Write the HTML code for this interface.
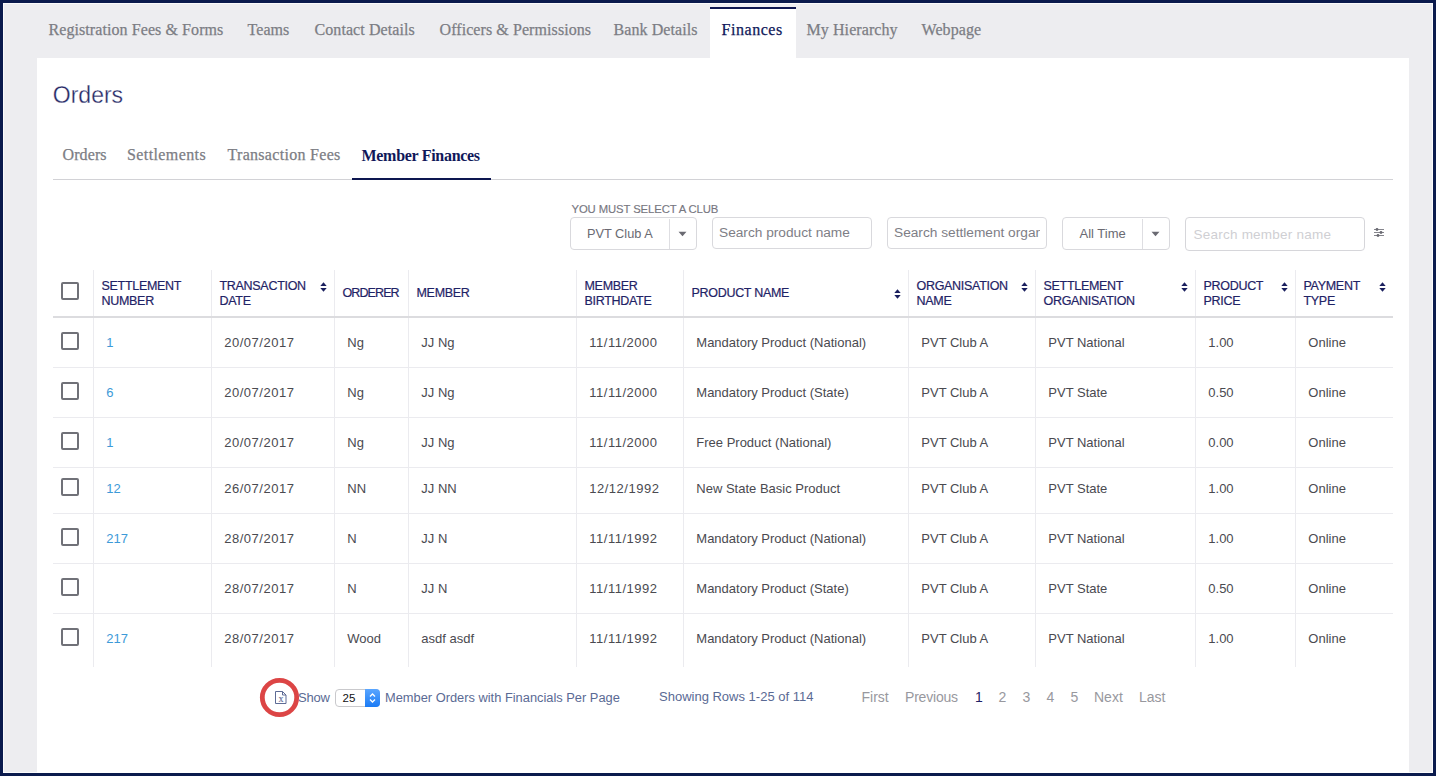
<!DOCTYPE html>
<html><head><meta charset="utf-8"><title>Orders</title>
<style>
*{box-sizing:border-box;margin:0;padding:0}
html,body{width:1436px;height:776px;overflow:hidden;background:#0b1b4d}
body{position:relative;font-family:'Liberation Sans',sans-serif}
.r{position:absolute}
.t{position:absolute;white-space:nowrap}
</style></head><body>
<div class="r" style="left:0px;top:0px;width:1436px;height:776px;background:#0b1b4d"></div>
<div class="r" style="left:3px;top:3px;width:1430px;height:770px;background:#fbfbfc"></div>
<div class="r" style="left:4px;top:4px;width:1428px;height:768px;background:#ededf0"></div>
<div class="r" style="left:710px;top:7px;width:86px;height:51px;background:#fff;border-top:2px solid #0d1650"></div>
<div class="r" style="left:37px;top:58px;width:1372px;height:715px;background:#fff"></div>
<div class="t" style="left:48.5px;top:20.00px;font:400 16px/19px 'Liberation Serif',serif;color:#7c7d84;letter-spacing:0.08px;-webkit-text-stroke:0.25px #7c7d84">Registration Fees &amp; Forms</div>
<div class="t" style="left:247.5px;top:20.00px;font:400 16px/19px 'Liberation Serif',serif;color:#7c7d84;letter-spacing:0.08px;-webkit-text-stroke:0.25px #7c7d84">Teams</div>
<div class="t" style="left:314.5px;top:20.00px;font:400 16px/19px 'Liberation Serif',serif;color:#7c7d84;letter-spacing:0.08px;-webkit-text-stroke:0.25px #7c7d84">Contact Details</div>
<div class="t" style="left:439.5px;top:20.00px;font:400 16px/19px 'Liberation Serif',serif;color:#7c7d84;letter-spacing:0.08px;-webkit-text-stroke:0.25px #7c7d84">Officers &amp; Permissions</div>
<div class="t" style="left:613.5px;top:20.00px;font:400 16px/19px 'Liberation Serif',serif;color:#7c7d84;letter-spacing:0.08px;-webkit-text-stroke:0.25px #7c7d84">Bank Details</div>
<div class="t" style="left:806.5px;top:20.00px;font:400 16px/19px 'Liberation Serif',serif;color:#7c7d84;letter-spacing:0.08px;-webkit-text-stroke:0.25px #7c7d84">My Hierarchy</div>
<div class="t" style="left:921.5px;top:20.00px;font:400 16px/19px 'Liberation Serif',serif;color:#7c7d84;letter-spacing:0.08px;-webkit-text-stroke:0.25px #7c7d84">Webpage</div>
<div class="t" style="left:721.5px;top:20.00px;font:400 16px/19px 'Liberation Serif',serif;color:#10185a;letter-spacing:0.55px;-webkit-text-stroke:0.25px #10185a">Finances</div>
<div class="t" style="left:52.8px;top:80.83px;font:400 23px/28px 'Liberation Sans',sans-serif;color:#262a66;letter-spacing:0px;-webkit-text-stroke:0.3px #fff">Orders</div>
<div class="t" style="left:62.5px;top:145.40px;font:400 16px/19px 'Liberation Serif',serif;color:#7c7d84;letter-spacing:0.1px;-webkit-text-stroke:0.25px #7c7d84">Orders</div>
<div class="t" style="left:127px;top:145.40px;font:400 16px/19px 'Liberation Serif',serif;color:#7c7d84;letter-spacing:0.4px;-webkit-text-stroke:0.25px #7c7d84">Settlements</div>
<div class="t" style="left:227.5px;top:145.40px;font:400 16px/19px 'Liberation Serif',serif;color:#7c7d84;letter-spacing:0.3px;-webkit-text-stroke:0.25px #7c7d84">Transaction Fees</div>
<div class="t" style="left:361.5px;top:145.70px;font:700 16px/19px 'Liberation Serif',serif;color:#10185a;letter-spacing:-0.3px;">Member Finances</div>
<div class="r" style="left:53px;top:179px;width:1340px;height:1px;background:#d2d2d6"></div>
<div class="r" style="left:352px;top:178px;width:139px;height:2px;background:#0d1650"></div>
<div class="t" style="left:571.5px;top:202.08px;font:400 11.3px/14px 'Liberation Sans',sans-serif;color:#77777f;letter-spacing:-0.1px;-webkit-text-stroke:0.15px #77777f">YOU MUST SELECT A CLUB</div>
<div class="r" style="left:570px;top:217px;width:127px;height:33px;border:1px solid #d9d9dd;border-radius:4px;background:#fff"></div>
<div class="r" style="left:669px;top:219px;width:1px;height:30px;background:#dedee2"></div>
<div class="t" style="left:587px;top:226.48px;font:400 12.75px/15px 'Liberation Sans',sans-serif;color:#6a6a72;letter-spacing:0px;">PVT Club A</div>
<svg class="r" style="left:678px;top:231px" width="9" height="6"><path d="M0.5 0.8 L8.5 0.8 L4.5 5.2 Z" fill="#6a6a72"/></svg>
<div class="r" style="left:712px;top:217px;width:160px;height:32px;border:1px solid #d9d9dd;border-radius:4px;background:#fff"></div>
<div class="t" style="left:719px;top:224.75px;font:400 13.7px/16px 'Liberation Sans',sans-serif;color:#7e7e86;letter-spacing:0px;">Search product name</div>
<div class="r" style="left:887px;top:217px;width:160px;height:32px;border:1px solid #d9d9dd;border-radius:4px;background:#fff;overflow:hidden"></div>
<div class="r" style="left:888px;top:218px;width:152px;height:30px;overflow:hidden"><div class="t" style="left:6px;top:4.75px;font:400 13.7px/20px 'Liberation Sans',sans-serif;color:#7e7e86">Search settlement organisation</div></div>
<div class="r" style="left:1062px;top:217px;width:108px;height:33px;border:1px solid #d9d9dd;border-radius:4px;background:#fff"></div>
<div class="r" style="left:1142px;top:219px;width:1px;height:30px;background:#dedee2"></div>
<div class="t" style="left:1079.5px;top:226.09px;font:400 13px/16px 'Liberation Sans',sans-serif;color:#6a6a72;letter-spacing:0px;">All Time</div>
<svg class="r" style="left:1151px;top:231px" width="9" height="6"><path d="M0.5 0.8 L8.5 0.8 L4.5 5.2 Z" fill="#6a6a72"/></svg>
<div class="r" style="left:1185px;top:217px;width:180px;height:34px;border:1.5px solid #d6d6da;border-radius:4px;background:#fff"></div>
<div class="t" style="left:1193.5px;top:226.92px;font:400 13.5px/16px 'Liberation Sans',sans-serif;color:#cfcfd3;letter-spacing:0.23px;">Search member name</div>
<svg class="r" style="left:1373px;top:227px" width="13" height="11"><g stroke="#85858c" stroke-width="1"><line x1="1" y1="2.5" x2="11" y2="2.5"/><line x1="1" y1="5.5" x2="11" y2="5.5"/><line x1="1" y1="8.5" x2="11" y2="8.5"/></g><g fill="#6a6a72"><circle cx="4" cy="2.5" r="1.4"/><circle cx="8" cy="5.5" r="1.4"/><circle cx="5" cy="8.5" r="1.4"/></g></svg>
<div class="r" style="left:93px;top:270px;width:1px;height:397px;background:#ebebef"></div>
<div class="r" style="left:211px;top:270px;width:1px;height:397px;background:#ebebef"></div>
<div class="r" style="left:334px;top:270px;width:1px;height:397px;background:#ebebef"></div>
<div class="r" style="left:408px;top:270px;width:1px;height:397px;background:#ebebef"></div>
<div class="r" style="left:576px;top:270px;width:1px;height:397px;background:#ebebef"></div>
<div class="r" style="left:683px;top:270px;width:1px;height:397px;background:#ebebef"></div>
<div class="r" style="left:908px;top:270px;width:1px;height:397px;background:#ebebef"></div>
<div class="r" style="left:1035px;top:270px;width:1px;height:397px;background:#ebebef"></div>
<div class="r" style="left:1195px;top:270px;width:1px;height:397px;background:#ebebef"></div>
<div class="r" style="left:1295px;top:270px;width:1px;height:397px;background:#ebebef"></div>
<div class="r" style="left:53px;top:316px;width:1340px;height:2px;background:#dcdcdf"></div>
<div class="r" style="left:53px;top:367px;width:1340px;height:1px;background:#ebebef"></div>
<div class="r" style="left:53px;top:417px;width:1340px;height:1px;background:#ebebef"></div>
<div class="r" style="left:53px;top:467px;width:1340px;height:1px;background:#ebebef"></div>
<div class="r" style="left:53px;top:513px;width:1340px;height:1px;background:#ebebef"></div>
<div class="r" style="left:53px;top:563px;width:1340px;height:1px;background:#ebebef"></div>
<div class="r" style="left:53px;top:613px;width:1340px;height:1px;background:#ebebef"></div>
<div class="r" style="left:61px;top:282px;width:18px;height:18px;border:2px solid #707178;border-radius:2px;background:#fff"></div>
<div class="t" style="left:101.5px;top:278.87px;font:400 12.5px/15px 'Liberation Sans',sans-serif;color:#1f2366;letter-spacing:-0.3px;-webkit-text-stroke:0.2px #1f2366">SETTLEMENT</div>
<div class="t" style="left:101.5px;top:293.97px;font:400 12.5px/15px 'Liberation Sans',sans-serif;color:#1f2366;letter-spacing:-0.3px;-webkit-text-stroke:0.2px #1f2366">NUMBER</div>
<div class="t" style="left:219.5px;top:278.87px;font:400 12.5px/15px 'Liberation Sans',sans-serif;color:#1f2366;letter-spacing:-0.3px;-webkit-text-stroke:0.2px #1f2366">TRANSACTION</div>
<div class="t" style="left:219.5px;top:293.97px;font:400 12.5px/15px 'Liberation Sans',sans-serif;color:#1f2366;letter-spacing:-0.3px;-webkit-text-stroke:0.2px #1f2366">DATE</div>
<svg class="r" style="left:319.5px;top:282px" width="7" height="10"><path d="M0.3 4 L3.5 0.3 L6.7 4 Z M0.3 6 L3.5 9.7 L6.7 6 Z" fill="#1a1f5e"/></svg>
<div class="t" style="left:342.5px;top:285.57px;font:400 12.5px/15px 'Liberation Sans',sans-serif;color:#1f2366;letter-spacing:-0.9px;-webkit-text-stroke:0.2px #1f2366">ORDERER</div>
<div class="t" style="left:416.5px;top:285.57px;font:400 12.5px/15px 'Liberation Sans',sans-serif;color:#1f2366;letter-spacing:-0.3px;-webkit-text-stroke:0.2px #1f2366">MEMBER</div>
<div class="t" style="left:584.5px;top:278.87px;font:400 12.5px/15px 'Liberation Sans',sans-serif;color:#1f2366;letter-spacing:-0.3px;-webkit-text-stroke:0.2px #1f2366">MEMBER</div>
<div class="t" style="left:584.5px;top:293.97px;font:400 12.5px/15px 'Liberation Sans',sans-serif;color:#1f2366;letter-spacing:-0.3px;-webkit-text-stroke:0.2px #1f2366">BIRTHDATE</div>
<div class="t" style="left:691.5px;top:285.57px;font:400 12.5px/15px 'Liberation Sans',sans-serif;color:#1f2366;letter-spacing:-0.3px;-webkit-text-stroke:0.2px #1f2366">PRODUCT NAME</div>
<svg class="r" style="left:893.5px;top:289px" width="7" height="10"><path d="M0.3 4 L3.5 0.3 L6.7 4 Z M0.3 6 L3.5 9.7 L6.7 6 Z" fill="#1a1f5e"/></svg>
<div class="t" style="left:916.5px;top:278.87px;font:400 12.5px/15px 'Liberation Sans',sans-serif;color:#1f2366;letter-spacing:-0.3px;-webkit-text-stroke:0.2px #1f2366">ORGANISATION</div>
<div class="t" style="left:916.5px;top:293.97px;font:400 12.5px/15px 'Liberation Sans',sans-serif;color:#1f2366;letter-spacing:-0.3px;-webkit-text-stroke:0.2px #1f2366">NAME</div>
<svg class="r" style="left:1020.5px;top:282px" width="7" height="10"><path d="M0.3 4 L3.5 0.3 L6.7 4 Z M0.3 6 L3.5 9.7 L6.7 6 Z" fill="#1a1f5e"/></svg>
<div class="t" style="left:1043.5px;top:278.87px;font:400 12.5px/15px 'Liberation Sans',sans-serif;color:#1f2366;letter-spacing:-0.3px;-webkit-text-stroke:0.2px #1f2366">SETTLEMENT</div>
<div class="t" style="left:1043.5px;top:293.97px;font:400 12.5px/15px 'Liberation Sans',sans-serif;color:#1f2366;letter-spacing:-0.3px;-webkit-text-stroke:0.2px #1f2366">ORGANISATION</div>
<svg class="r" style="left:1180.5px;top:282px" width="7" height="10"><path d="M0.3 4 L3.5 0.3 L6.7 4 Z M0.3 6 L3.5 9.7 L6.7 6 Z" fill="#1a1f5e"/></svg>
<div class="t" style="left:1203.5px;top:278.87px;font:400 12.5px/15px 'Liberation Sans',sans-serif;color:#1f2366;letter-spacing:-0.3px;-webkit-text-stroke:0.2px #1f2366">PRODUCT</div>
<div class="t" style="left:1203.5px;top:293.97px;font:400 12.5px/15px 'Liberation Sans',sans-serif;color:#1f2366;letter-spacing:-0.3px;-webkit-text-stroke:0.2px #1f2366">PRICE</div>
<svg class="r" style="left:1280.5px;top:282px" width="7" height="10"><path d="M0.3 4 L3.5 0.3 L6.7 4 Z M0.3 6 L3.5 9.7 L6.7 6 Z" fill="#1a1f5e"/></svg>
<div class="t" style="left:1303.5px;top:278.87px;font:400 12.5px/15px 'Liberation Sans',sans-serif;color:#1f2366;letter-spacing:-0.3px;-webkit-text-stroke:0.2px #1f2366">PAYMENT</div>
<div class="t" style="left:1303.5px;top:293.97px;font:400 12.5px/15px 'Liberation Sans',sans-serif;color:#1f2366;letter-spacing:-0.3px;-webkit-text-stroke:0.2px #1f2366">TYPE</div>
<svg class="r" style="left:1378.5px;top:282px" width="7" height="10"><path d="M0.3 4 L3.5 0.3 L6.7 4 Z M0.3 6 L3.5 9.7 L6.7 6 Z" fill="#1a1f5e"/></svg>
<div class="r" style="left:61px;top:332px;width:18px;height:18px;border:2px solid #707178;border-radius:2px;background:#fff"></div>
<div class="t" style="left:106.3px;top:334.79px;font:400 13px/16px 'Liberation Sans',sans-serif;color:#3d9ad8;letter-spacing:0px;">1</div>
<div class="t" style="left:224.3px;top:334.79px;font:400 13px/16px 'Liberation Sans',sans-serif;color:#4a4a50;letter-spacing:0.5px;">20/07/2017</div>
<div class="t" style="left:347.3px;top:334.79px;font:400 13px/16px 'Liberation Sans',sans-serif;color:#4a4a50;letter-spacing:0px;">Ng</div>
<div class="t" style="left:421.3px;top:334.79px;font:400 13px/16px 'Liberation Sans',sans-serif;color:#4a4a50;letter-spacing:0px;">JJ Ng</div>
<div class="t" style="left:589.3px;top:334.79px;font:400 13px/16px 'Liberation Sans',sans-serif;color:#4a4a50;letter-spacing:0.5px;">11/11/2000</div>
<div class="t" style="left:696.3px;top:334.79px;font:400 13px/16px 'Liberation Sans',sans-serif;color:#4a4a50;letter-spacing:0px;">Mandatory Product (National)</div>
<div class="t" style="left:921.3px;top:334.79px;font:400 13px/16px 'Liberation Sans',sans-serif;color:#4a4a50;letter-spacing:0px;">PVT Club A</div>
<div class="t" style="left:1048.3px;top:334.79px;font:400 13px/16px 'Liberation Sans',sans-serif;color:#4a4a50;letter-spacing:0px;">PVT National</div>
<div class="t" style="left:1208.3px;top:334.79px;font:400 13px/16px 'Liberation Sans',sans-serif;color:#4a4a50;letter-spacing:0px;">1.00</div>
<div class="t" style="left:1308.3px;top:334.79px;font:400 13px/16px 'Liberation Sans',sans-serif;color:#4a4a50;letter-spacing:0px;">Online</div>
<div class="r" style="left:61px;top:382px;width:18px;height:18px;border:2px solid #707178;border-radius:2px;background:#fff"></div>
<div class="t" style="left:106.3px;top:384.79px;font:400 13px/16px 'Liberation Sans',sans-serif;color:#3d9ad8;letter-spacing:0px;">6</div>
<div class="t" style="left:224.3px;top:384.79px;font:400 13px/16px 'Liberation Sans',sans-serif;color:#4a4a50;letter-spacing:0.5px;">20/07/2017</div>
<div class="t" style="left:347.3px;top:384.79px;font:400 13px/16px 'Liberation Sans',sans-serif;color:#4a4a50;letter-spacing:0px;">Ng</div>
<div class="t" style="left:421.3px;top:384.79px;font:400 13px/16px 'Liberation Sans',sans-serif;color:#4a4a50;letter-spacing:0px;">JJ Ng</div>
<div class="t" style="left:589.3px;top:384.79px;font:400 13px/16px 'Liberation Sans',sans-serif;color:#4a4a50;letter-spacing:0.5px;">11/11/2000</div>
<div class="t" style="left:696.3px;top:384.79px;font:400 13px/16px 'Liberation Sans',sans-serif;color:#4a4a50;letter-spacing:0px;">Mandatory Product (State)</div>
<div class="t" style="left:921.3px;top:384.79px;font:400 13px/16px 'Liberation Sans',sans-serif;color:#4a4a50;letter-spacing:0px;">PVT Club A</div>
<div class="t" style="left:1048.3px;top:384.79px;font:400 13px/16px 'Liberation Sans',sans-serif;color:#4a4a50;letter-spacing:0px;">PVT State</div>
<div class="t" style="left:1208.3px;top:384.79px;font:400 13px/16px 'Liberation Sans',sans-serif;color:#4a4a50;letter-spacing:0px;">0.50</div>
<div class="t" style="left:1308.3px;top:384.79px;font:400 13px/16px 'Liberation Sans',sans-serif;color:#4a4a50;letter-spacing:0px;">Online</div>
<div class="r" style="left:61px;top:432px;width:18px;height:18px;border:2px solid #707178;border-radius:2px;background:#fff"></div>
<div class="t" style="left:106.3px;top:434.79px;font:400 13px/16px 'Liberation Sans',sans-serif;color:#3d9ad8;letter-spacing:0px;">1</div>
<div class="t" style="left:224.3px;top:434.79px;font:400 13px/16px 'Liberation Sans',sans-serif;color:#4a4a50;letter-spacing:0.5px;">20/07/2017</div>
<div class="t" style="left:347.3px;top:434.79px;font:400 13px/16px 'Liberation Sans',sans-serif;color:#4a4a50;letter-spacing:0px;">Ng</div>
<div class="t" style="left:421.3px;top:434.79px;font:400 13px/16px 'Liberation Sans',sans-serif;color:#4a4a50;letter-spacing:0px;">JJ Ng</div>
<div class="t" style="left:589.3px;top:434.79px;font:400 13px/16px 'Liberation Sans',sans-serif;color:#4a4a50;letter-spacing:0.5px;">11/11/2000</div>
<div class="t" style="left:696.3px;top:434.79px;font:400 13px/16px 'Liberation Sans',sans-serif;color:#4a4a50;letter-spacing:0px;">Free Product (National)</div>
<div class="t" style="left:921.3px;top:434.79px;font:400 13px/16px 'Liberation Sans',sans-serif;color:#4a4a50;letter-spacing:0px;">PVT Club A</div>
<div class="t" style="left:1048.3px;top:434.79px;font:400 13px/16px 'Liberation Sans',sans-serif;color:#4a4a50;letter-spacing:0px;">PVT National</div>
<div class="t" style="left:1208.3px;top:434.79px;font:400 13px/16px 'Liberation Sans',sans-serif;color:#4a4a50;letter-spacing:0px;">0.00</div>
<div class="t" style="left:1308.3px;top:434.79px;font:400 13px/16px 'Liberation Sans',sans-serif;color:#4a4a50;letter-spacing:0px;">Online</div>
<div class="r" style="left:61px;top:478px;width:18px;height:18px;border:2px solid #707178;border-radius:2px;background:#fff"></div>
<div class="t" style="left:106.3px;top:480.69px;font:400 13px/16px 'Liberation Sans',sans-serif;color:#3d9ad8;letter-spacing:0px;">12</div>
<div class="t" style="left:224.3px;top:480.69px;font:400 13px/16px 'Liberation Sans',sans-serif;color:#4a4a50;letter-spacing:0.5px;">26/07/2017</div>
<div class="t" style="left:347.3px;top:480.69px;font:400 13px/16px 'Liberation Sans',sans-serif;color:#4a4a50;letter-spacing:0px;">NN</div>
<div class="t" style="left:421.3px;top:480.69px;font:400 13px/16px 'Liberation Sans',sans-serif;color:#4a4a50;letter-spacing:0px;">JJ NN</div>
<div class="t" style="left:589.3px;top:480.69px;font:400 13px/16px 'Liberation Sans',sans-serif;color:#4a4a50;letter-spacing:0.5px;">12/12/1992</div>
<div class="t" style="left:696.3px;top:480.69px;font:400 13px/16px 'Liberation Sans',sans-serif;color:#4a4a50;letter-spacing:0px;">New State Basic Product</div>
<div class="t" style="left:921.3px;top:480.69px;font:400 13px/16px 'Liberation Sans',sans-serif;color:#4a4a50;letter-spacing:0px;">PVT Club A</div>
<div class="t" style="left:1048.3px;top:480.69px;font:400 13px/16px 'Liberation Sans',sans-serif;color:#4a4a50;letter-spacing:0px;">PVT State</div>
<div class="t" style="left:1208.3px;top:480.69px;font:400 13px/16px 'Liberation Sans',sans-serif;color:#4a4a50;letter-spacing:0px;">1.00</div>
<div class="t" style="left:1308.3px;top:480.69px;font:400 13px/16px 'Liberation Sans',sans-serif;color:#4a4a50;letter-spacing:0px;">Online</div>
<div class="r" style="left:61px;top:528px;width:18px;height:18px;border:2px solid #707178;border-radius:2px;background:#fff"></div>
<div class="t" style="left:106.3px;top:530.79px;font:400 13px/16px 'Liberation Sans',sans-serif;color:#3d9ad8;letter-spacing:0px;">217</div>
<div class="t" style="left:224.3px;top:530.79px;font:400 13px/16px 'Liberation Sans',sans-serif;color:#4a4a50;letter-spacing:0.5px;">28/07/2017</div>
<div class="t" style="left:347.3px;top:530.79px;font:400 13px/16px 'Liberation Sans',sans-serif;color:#4a4a50;letter-spacing:0px;">N</div>
<div class="t" style="left:421.3px;top:530.79px;font:400 13px/16px 'Liberation Sans',sans-serif;color:#4a4a50;letter-spacing:0px;">JJ N</div>
<div class="t" style="left:589.3px;top:530.79px;font:400 13px/16px 'Liberation Sans',sans-serif;color:#4a4a50;letter-spacing:0.5px;">11/11/1992</div>
<div class="t" style="left:696.3px;top:530.79px;font:400 13px/16px 'Liberation Sans',sans-serif;color:#4a4a50;letter-spacing:0px;">Mandatory Product (National)</div>
<div class="t" style="left:921.3px;top:530.79px;font:400 13px/16px 'Liberation Sans',sans-serif;color:#4a4a50;letter-spacing:0px;">PVT Club A</div>
<div class="t" style="left:1048.3px;top:530.79px;font:400 13px/16px 'Liberation Sans',sans-serif;color:#4a4a50;letter-spacing:0px;">PVT National</div>
<div class="t" style="left:1208.3px;top:530.79px;font:400 13px/16px 'Liberation Sans',sans-serif;color:#4a4a50;letter-spacing:0px;">1.00</div>
<div class="t" style="left:1308.3px;top:530.79px;font:400 13px/16px 'Liberation Sans',sans-serif;color:#4a4a50;letter-spacing:0px;">Online</div>
<div class="r" style="left:61px;top:578px;width:18px;height:18px;border:2px solid #707178;border-radius:2px;background:#fff"></div>
<div class="t" style="left:224.3px;top:580.79px;font:400 13px/16px 'Liberation Sans',sans-serif;color:#4a4a50;letter-spacing:0.5px;">28/07/2017</div>
<div class="t" style="left:347.3px;top:580.79px;font:400 13px/16px 'Liberation Sans',sans-serif;color:#4a4a50;letter-spacing:0px;">N</div>
<div class="t" style="left:421.3px;top:580.79px;font:400 13px/16px 'Liberation Sans',sans-serif;color:#4a4a50;letter-spacing:0px;">JJ N</div>
<div class="t" style="left:589.3px;top:580.79px;font:400 13px/16px 'Liberation Sans',sans-serif;color:#4a4a50;letter-spacing:0.5px;">11/11/1992</div>
<div class="t" style="left:696.3px;top:580.79px;font:400 13px/16px 'Liberation Sans',sans-serif;color:#4a4a50;letter-spacing:0px;">Mandatory Product (State)</div>
<div class="t" style="left:921.3px;top:580.79px;font:400 13px/16px 'Liberation Sans',sans-serif;color:#4a4a50;letter-spacing:0px;">PVT Club A</div>
<div class="t" style="left:1048.3px;top:580.79px;font:400 13px/16px 'Liberation Sans',sans-serif;color:#4a4a50;letter-spacing:0px;">PVT State</div>
<div class="t" style="left:1208.3px;top:580.79px;font:400 13px/16px 'Liberation Sans',sans-serif;color:#4a4a50;letter-spacing:0px;">0.50</div>
<div class="t" style="left:1308.3px;top:580.79px;font:400 13px/16px 'Liberation Sans',sans-serif;color:#4a4a50;letter-spacing:0px;">Online</div>
<div class="r" style="left:61px;top:628px;width:18px;height:18px;border:2px solid #707178;border-radius:2px;background:#fff"></div>
<div class="t" style="left:106.3px;top:630.79px;font:400 13px/16px 'Liberation Sans',sans-serif;color:#3d9ad8;letter-spacing:0px;">217</div>
<div class="t" style="left:224.3px;top:630.79px;font:400 13px/16px 'Liberation Sans',sans-serif;color:#4a4a50;letter-spacing:0.5px;">28/07/2017</div>
<div class="t" style="left:347.3px;top:630.79px;font:400 13px/16px 'Liberation Sans',sans-serif;color:#4a4a50;letter-spacing:0px;">Wood</div>
<div class="t" style="left:421.3px;top:630.79px;font:400 13px/16px 'Liberation Sans',sans-serif;color:#4a4a50;letter-spacing:0px;">asdf asdf</div>
<div class="t" style="left:589.3px;top:630.79px;font:400 13px/16px 'Liberation Sans',sans-serif;color:#4a4a50;letter-spacing:0.5px;">11/11/1992</div>
<div class="t" style="left:696.3px;top:630.79px;font:400 13px/16px 'Liberation Sans',sans-serif;color:#4a4a50;letter-spacing:0px;">Mandatory Product (National)</div>
<div class="t" style="left:921.3px;top:630.79px;font:400 13px/16px 'Liberation Sans',sans-serif;color:#4a4a50;letter-spacing:0px;">PVT Club A</div>
<div class="t" style="left:1048.3px;top:630.79px;font:400 13px/16px 'Liberation Sans',sans-serif;color:#4a4a50;letter-spacing:0px;">PVT National</div>
<div class="t" style="left:1208.3px;top:630.79px;font:400 13px/16px 'Liberation Sans',sans-serif;color:#4a4a50;letter-spacing:0px;">1.00</div>
<div class="t" style="left:1308.3px;top:630.79px;font:400 13px/16px 'Liberation Sans',sans-serif;color:#4a4a50;letter-spacing:0px;">Online</div>
<svg class="r" style="left:258px;top:676px" width="44" height="44"><circle cx="21.5" cy="21.5" r="17.2" fill="none" stroke="#dc4545" stroke-width="4.8"/></svg>
<svg class="r" style="left:274px;top:690px" width="14" height="15"><path d="M1.5 1.5 H8.5 L12 5 V13.5 H1.5 Z M8.5 1.5 V5 H12" fill="none" stroke="#5d6b95" stroke-width="1"/><text x="7" y="12.2" text-anchor="middle" font-family="Liberation Serif" font-size="10" stroke="#5d6b95" stroke-width="0.1" fill="#5d6b95">x</text></svg>
<div class="t" style="left:298px;top:689.89px;font:400 13px/16px 'Liberation Sans',sans-serif;color:#5a6a94;letter-spacing:-0.25px;">Show</div>
<div class="r" style="left:335px;top:689px;width:45px;height:18px;border:1px solid #c9c9cc;border-radius:4px;background:#fff;overflow:hidden"></div>
<div class="r" style="left:365px;top:689px;width:15px;height:18px;background:linear-gradient(#5aa6ff,#1b7bf5);border-radius:0 4px 4px 0"></div>
<svg class="r" style="left:367px;top:691px" width="11" height="14"><path d="M3 5.5 L5.5 3 L8 5.5 M3 8.5 L5.5 11 L8 8.5" fill="none" stroke="#fff" stroke-width="1.3"/></svg>
<div class="t" style="left:342.5px;top:690.81px;font:400 11.5px/14px 'Liberation Sans',sans-serif;color:#111;letter-spacing:0px;">25</div>
<div class="t" style="left:385px;top:690.44px;font:400 12.85px/15px 'Liberation Sans',sans-serif;color:#5a6a94;letter-spacing:0px;">Member Orders with Financials Per Page</div>
<div class="t" style="left:659px;top:688.99px;font:400 13px/16px 'Liberation Sans',sans-serif;color:#5a6a94;letter-spacing:0px;">Showing Rows 1-25 of 114</div>
<div class="t" style="left:861.5px;top:688.65px;font:400 14px/17px 'Liberation Sans',sans-serif;color:#98989e;letter-spacing:0px;">First</div>
<div class="t" style="left:905px;top:689.25px;font:400 14px/17px 'Liberation Sans',sans-serif;color:#98989e;letter-spacing:-0.2px;">Previous</div>
<div class="t" style="left:975px;top:688.65px;font:400 14px/17px 'Liberation Sans',sans-serif;color:#1f2366;letter-spacing:0px;">1</div>
<div class="t" style="left:998.5px;top:688.65px;font:400 14px/17px 'Liberation Sans',sans-serif;color:#98989e;letter-spacing:0px;">2</div>
<div class="t" style="left:1022.5px;top:688.65px;font:400 14px/17px 'Liberation Sans',sans-serif;color:#98989e;letter-spacing:0px;">3</div>
<div class="t" style="left:1046.5px;top:688.65px;font:400 14px/17px 'Liberation Sans',sans-serif;color:#98989e;letter-spacing:0px;">4</div>
<div class="t" style="left:1070.5px;top:688.65px;font:400 14px/17px 'Liberation Sans',sans-serif;color:#98989e;letter-spacing:0px;">5</div>
<div class="t" style="left:1094px;top:688.65px;font:400 14px/17px 'Liberation Sans',sans-serif;color:#98989e;letter-spacing:0px;">Next</div>
<div class="t" style="left:1139px;top:688.65px;font:400 14px/17px 'Liberation Sans',sans-serif;color:#98989e;letter-spacing:0px;">Last</div>
</body></html>
